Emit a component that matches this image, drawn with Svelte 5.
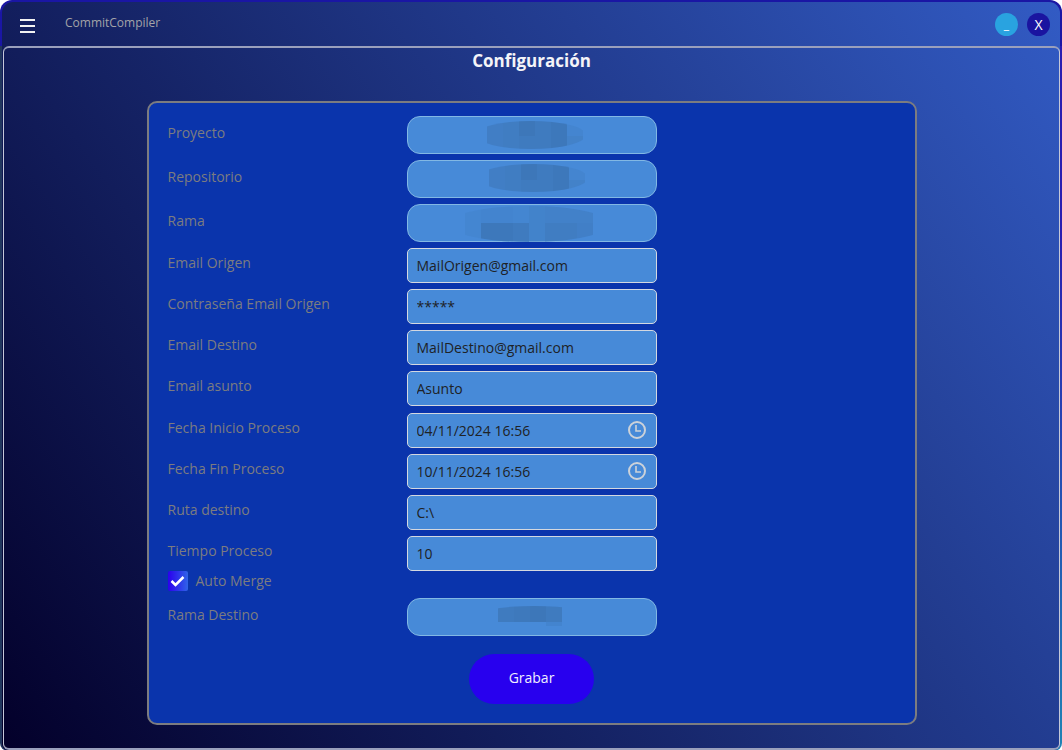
<script lang="ts">
  type Tile = [number, number, number, number, number];
  type Blur = { cx: number; cy: number; rx: number; ry: number; tiles: Tile[] };
  type Field = { id: string; label: string; value: string; clock?: boolean };

  const shortTiles = (x: number): Tile[] => [
    [x, 4, 16, 30, 0.6], [x + 16, 4, 16, 30, 0.7], [x + 32, 4, 16, 16, 1], [x + 32, 20, 16, 14, 0.8],
    [x + 48, 4, 16, 30, 0.8], [x + 64, 4, 16, 30, 0.95], [x + 80, 4, 16, 16, 0.25], [x + 80, 20, 16, 14, 0.45],
  ];
  const projectBlur: Blur = { cx: 124, cy: 19, rx: 55, ry: 14, tiles: shortTiles(80) };
  const repoBlur: Blur = { cx: 126, cy: 18, rx: 55, ry: 14, tiles: shortTiles(82) };
  const branchBlur: Blur = {
    cx: 122, cy: 20, rx: 80, ry: 18,
    tiles: [
      [58, 2, 16, 36, 0.2], [74, 2, 32, 17, 0.3], [106, 2, 16, 17, 0.2], [122, 2, 16, 36, 0.4],
      [138, 2, 48, 17, 0.5], [74, 19, 32, 19, 0.95], [106, 19, 16, 19, 0.8], [138, 19, 32, 19, 0.7],
      [170, 19, 16, 19, 0.55],
    ],
  };
  const targetBlur: Blur = {
    cx: 127, cy: 19, rx: 60, ry: 11,
    tiles: [
      [91, 8, 16, 16, 0.8], [107, 8, 16, 16, 0.9], [123, 8, 16, 16, 1], [139, 8, 16, 16, 0.8],
      [139, 24, 16, 4, 0.3],
    ],
  };

  const pickers = [
    { id: 'proyecto', label: 'Proyecto', blur: projectBlur },
    { id: 'repositorio', label: 'Repositorio', blur: repoBlur },
    { id: 'rama', label: 'Rama', blur: branchBlur },
  ];

  const mail: Field[] = $state([
    { id: 'origen', label: 'Email Origen', value: 'MailOrigen@gmail.com' },
    { id: 'clave', label: 'Contraseña Email Origen', value: '*****' },
    { id: 'destino', label: 'Email Destino', value: 'MailDestino@gmail.com' },
    { id: 'asunto', label: 'Email asunto', value: 'Asunto' },
  ]);
  const schedule: Field[] = $state([
    { id: 'inicio', label: 'Fecha Inicio Proceso', value: '04/11/2024 16:56', clock: true },
    { id: 'fin', label: 'Fecha Fin Proceso', value: '10/11/2024 16:56', clock: true },
    { id: 'ruta', label: 'Ruta destino', value: 'C:\\' },
    { id: 'tiempo', label: 'Tiempo Proceso', value: '10' },
  ]);
  let autoMerge = $state(true);
</script>

{#snippet picker(id: string, label: string, blur: Blur)}
  <div class="row">
    <label for={id}>{label}</label>
    <div class="control">
      <select {id}><option value=""></option></select>
      <svg class="mosaic" viewBox="0 0 250 38" aria-hidden="true">
        <clipPath id="{id}-clip"><ellipse cx={blur.cx} cy={blur.cy} rx={blur.rx} ry={blur.ry} /></clipPath>
        <g clip-path="url(#{id}-clip)" fill="#3d77b9" shape-rendering="crispEdges">
          {#each blur.tiles as [x, y, w, h, o]}
            <rect {x} {y} width={w} height={h} opacity={o} />
          {/each}
        </g>
      </svg>
    </div>
  </div>
{/snippet}

{#snippet field(f: Field)}
  <div class="row">
    <label for={f.id}>{f.label}</label>
    <div class="control">
      <input id={f.id} type="text" bind:value={f.value} />
      {#if f.clock}
        <svg class="clock" width="20" height="20" viewBox="0 0 20 20" fill="none" stroke="#ccd2d9" stroke-width="2" aria-hidden="true">
          <circle cx="10" cy="10" r="8" />
          <path d="M9 5v6h5" stroke-width="1.6" />
        </svg>
      {/if}
    </div>
  </div>
{/snippet}

<div class="window">
  <div class="surface">
    <header>
      <button class="menu" type="button" aria-label="Menú">
        <svg width="16" height="16" viewBox="0 0 16 16"><path d="M0 2h15M0 8h15M0 14h15" stroke="#f2f2f2" stroke-width="2" /></svg>
      </button>
      <span class="app-name">CommitCompiler</span>
      <div class="window-buttons">
        <button class="minimize" type="button">_</button>
        <button class="close" type="button">X</button>
      </div>
    </header>

    <main>
      <h1>Configuración</h1>
      <form>
        <div class="group">
          {#each pickers as p}
            {@render picker(p.id, p.label, p.blur)}
          {/each}
          {#each mail as f}
            {@render field(f)}
          {/each}
        </div>
        <div class="group">
          {#each schedule as f}
            {@render field(f)}
          {/each}
        </div>
        <label class="check">
          <input type="checkbox" bind:checked={autoMerge} />
          <span>Auto Merge</span>
        </label>
        {@render picker('rama-destino', 'Rama Destino', targetBlur)}
        <button class="save" type="button">Grabar</button>
      </form>
    </main>
  </div>
</div>

<style>
  :global(body) {
    background: #fff;
    font-family: 'Open Sans', 'Noto Sans', sans-serif;
    font-size: 14px;
  }
  * {
    box-sizing: border-box;
  }
  button,
  input,
  select {
    font: inherit;
    margin: 0;
  }
  button {
    border: 0;
    padding: 0;
    cursor: pointer;
  }
  .window {
    display: flex;
    min-height: 100vh;
    padding: 2px 2px 1px;
    border-radius: 12px 12px 8px 8px;
    background:
      linear-gradient(#1a16a4 46px, transparent 46px),
      linear-gradient(to bottom, #2a1cb0 30%, #1f83b4) right / 4px 100% no-repeat,
      linear-gradient(to right, #22385c, #2a1fb0 3%, #2a1fb0 60%, #1f83b4);
  }
  .surface {
    display: flex;
    flex: 1;
    flex-direction: column;
    border-radius: 11px 11px 6px 6px;
    padding: 0 0 0 1px;
    background: linear-gradient(55deg, #03002a, #325bc4);
  }
  header {
    display: flex;
    align-items: center;
    height: 44px;
    padding: 0 10px 0 17px;
  }
  .menu {
    display: flex;
    margin-top: 3px;
    background: none;
  }
  .app-name {
    margin-left: 29px;
    color: #a3a3a8;
    font-size: 12px;
    line-height: 18px;
    padding-bottom: 2px;
  }
  .window-buttons {
    display: flex;
    gap: 9px;
    margin-left: auto;
  }
  .window-buttons button {
    width: 23px;
    height: 23px;
    border-radius: 50%;
    color: #fff;
    line-height: 24px;
  }
  .minimize {
    background: #29a3e0;
    font-size: 12px;
  }
  .close {
    background: #1a14a0;
  }
  main {
    flex: 1;
    padding: 0 16px 23px;
    border: 1px solid #c4c8d8;
    border-top: 2px solid #9aa0bc;
    border-bottom: 2px solid #9aa0bc;
    border-radius: 6px;
  }
  h1 {
    margin: 0;
    color: #f4f4f8;
    font-size: 17px;
    font-weight: 700;
    line-height: 25px;
    text-align: center;
  }
  form {
    display: flex;
    flex-direction: column;
    max-width: 770px;
    margin: 28px auto 0;
    padding: 13px 19px 19px;
    border: 2px solid #7c7c80;
    border-radius: 10px;
    background: #0a34ac;
    color: #7c7c80;
  }
  .group {
    display: grid;
    gap: 6px;
  }
  .group + .group {
    margin-top: 7px;
  }
  .row {
    display: grid;
    grid-template-columns: 239px minmax(0, 250px);
    align-items: center;
  }
  .row label {
    padding-bottom: 5px;
    line-height: 20px;
  }
  .control {
    position: relative;
    display: flex;
  }
  .control input {
    width: 100%;
    height: 35px;
    padding: 0 9px;
    border: 1px solid #d4d8e0;
    border-radius: 5px;
    background: #478ad8;
    color: #1e2226;
  }
  select {
    width: 100%;
    height: 38px;
    appearance: none;
    border: 1px solid #82b8e4;
    border-radius: 13px;
    background: #478ad8;
  }
  .mosaic {
    position: absolute;
    inset: 0;
    pointer-events: none;
  }
  .clock {
    position: absolute;
    top: 7px;
    right: 10px;
    pointer-events: none;
  }
  .check {
    display: flex;
    align-items: center;
    gap: 8px;
    margin-bottom: 7px;
    line-height: 20px;
  }
  .check input {
    width: 20px;
    height: 20px;
    appearance: none;
    border-radius: 2px;
    background: linear-gradient(to right, #2b00ee, #3063e8);
  }
  .check input:checked {
    background:
      url("data:image/svg+xml,%3Csvg xmlns='http://www.w3.org/2000/svg' viewBox='0 0 20 20'%3E%3Cpath d='M3.5 10l4 4 8-8' fill='none' stroke='white' stroke-width='2.500'/%3E%3C/svg%3E"),
      linear-gradient(to right, #2b00ee, #3063e8);
  }
  .save {
    align-self: center;
    width: 125px;
    height: 50px;
    margin-top: 18px;
    padding-bottom: 4px;
    border-radius: 25px;
    background: #2800ee;
    color: #f0f0ff;
  }
</style>
